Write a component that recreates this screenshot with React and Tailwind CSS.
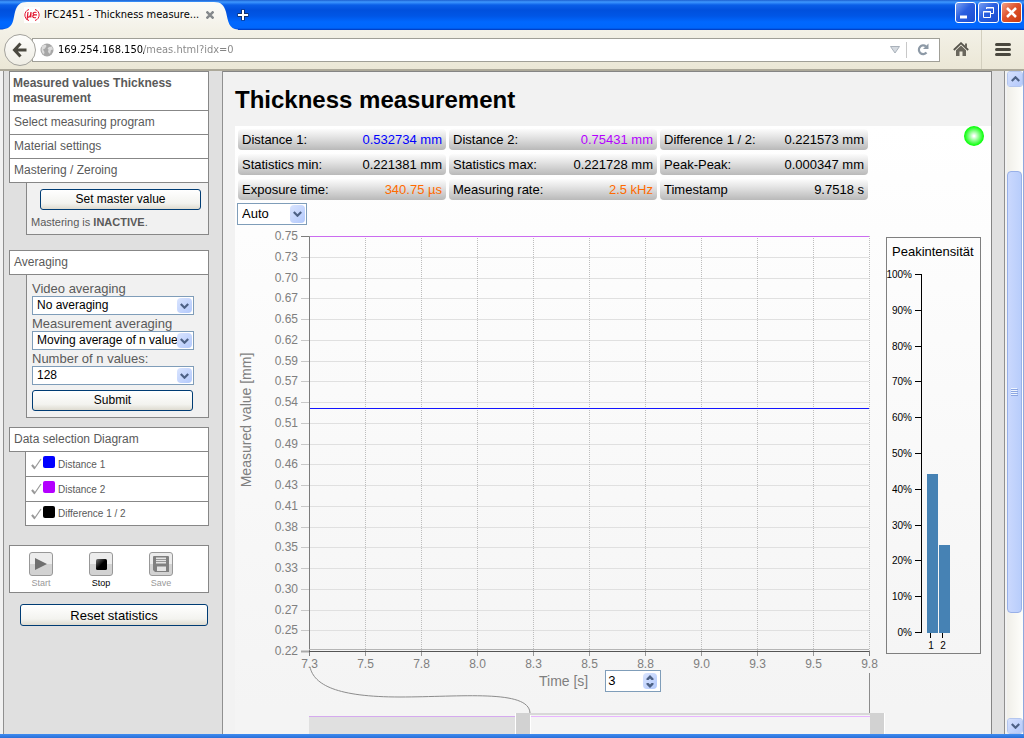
import { useState } from "react";

const MENU = ["Select measuring program", "Material settings", "Mastering / Zeroing"];

const STATS = [
  { label: "Distance 1:", value: "0.532734 mm", color: "text-[#0000ff]" },
  { label: "Distance 2:", value: "0.75431 mm", color: "text-[#b400ff]" },
  { label: "Difference 1 / 2:", value: "0.221573 mm", color: "text-black" },
  { label: "Statistics min:", value: "0.221381 mm", color: "text-black" },
  { label: "Statistics max:", value: "0.221728 mm", color: "text-black" },
  { label: "Peak-Peak:", value: "0.000347 mm", color: "text-black" },
  { label: "Exposure time:", value: "340.75 µs", color: "text-[#ff6a00]" },
  { label: "Measuring rate:", value: "2.5 kHz", color: "text-[#ff6a00]" },
  { label: "Timestamp", value: "9.7518 s", color: "text-black" },
];

const SERIES = [
  { name: "Distance 1", color: "bg-[#0000ff]" },
  { name: "Distance 2", color: "bg-[#b400ff]" },
  { name: "Difference 1 / 2", color: "bg-black" },
];

const Y_TICKS = [
  "0.75", "0.73", "0.70", "0.67", "0.65", "0.62", "0.59", "0.57", "0.54", "0.51", "0.49",
  "0.46", "0.43", "0.41", "0.38", "0.35", "0.33", "0.30", "0.27", "0.25", "0.22",
];
const X_TICKS = ["7.3", "7.5", "7.8", "8.0", "8.3", "8.5", "8.8", "9.0", "9.3", "9.5", "9.8"];

// Plot area inside the chart svg
const PLOT = { left: 74, top: 11, width: 560, height: 415 };

// ── WINDOW FRAME ─────────────────────────────────────────────────────

function TitleBar() {
  return (
    <header className="flex h-[30px] shrink-0 justify-between bg-[linear-gradient(#1c5fd0_0px,#3e98ff_2px,#0a5fe8_5px,#0050dd_10px,#0056e6_16px,#0068ff_22px,#0066fb_28px,#0036b8_30px)]">
      <div className="flex items-center">
        <div className="relative flex h-full w-[236px] items-center pl-6">
          <svg className="absolute left-0 top-0" width="238" height="30" aria-hidden="true">
            <defs>
              <linearGradient id="tab" x1="0" y1="0" x2="0" y2="1">
                <stop offset="0" stopColor="#fbfbf9" />
                <stop offset="1" stopColor="#f3f1e7" />
              </linearGradient>
            </defs>
            <path d="M0 30V29.500C14 29.500 13 20 15 12C17 5 20 2 27 2H214C221 2 224 5 226 12C228 21 229 29.500 238 29.500V30Z" fill="url(#tab)" />
          </svg>
          <svg className="relative" width="16" height="16" viewBox="0 0 16 16" fill="none" stroke="#e2172f" aria-hidden="true">
            <rect width="16" height="16" fill="#fff" stroke="none" />
            <path d="M5 2.500C-.5 4-.5 12 5 13.500M11 2.500C16.500 4 16.500 12 11 13.500" />
            <path d="M4 5 3 13M4 5 3.500 9.500C5 11 6.500 10 7 5L6.800 10.500M12.500 5.500C9 4.500 8 7.500 10.500 7.800C7.500 8.500 8.500 11.500 12 10.500M10 7.800H13" strokeWidth="1.200" />
          </svg>
          <span className="relative ml-1 w-[162px] whitespace-nowrap font-['DejaVu_Sans_Condensed','DejaVu_Sans',sans-serif] text-[11px] text-black">
            IFC2451 - Thickness measure...
          </span>
          <button className="relative" aria-label="Close tab">
            <svg width="8" height="8" stroke="#85898c" strokeWidth="2.500"><path d="M.5.5l7 7M7.500.5l-7 7" /></svg>
          </button>
        </div>
        <button aria-label="New tab" className="ml-px">
          <svg width="12" height="12">
            <path d="M6 .5V11.500M.5 6H11.500" stroke="#10316f" strokeWidth="4" />
            <path d="M6 1V11M1 6H11" stroke="#fff" strokeWidth="2" />
          </svg>
        </button>
      </div>
      <div className="flex gap-0.5 pr-0.5 pt-0.5">
        <button aria-label="Minimize" className="h-[21px] w-[21px] rounded-[3px] border border-white bg-[linear-gradient(135deg,#7aa0f2,#2a5fe0_45%,#1a4dd0)]">
          <svg width="19" height="19"><path d="M4 14h7" stroke="#fff" strokeWidth="3" /></svg>
        </button>
        <button aria-label="Restore" className="h-[21px] w-[21px] rounded-[3px] border border-white bg-[linear-gradient(135deg,#7aa0f2,#2a5fe0_45%,#1a4dd0)]">
          <svg width="19" height="19" fill="none" stroke="#fff">
            <path d="M7.500 6V4.500H14.500V10.500H12M7 5H15M4.500 8.500h7v6h-7zM4 9h8" />
          </svg>
        </button>
        <button aria-label="Close" className="h-[21px] w-[21px] rounded-[3px] border border-white bg-[linear-gradient(135deg,#f0a088,#e0532c_45%,#c83a10)]">
          <svg width="19" height="19"><path d="M5 5l9 9M14 5l-9 9" stroke="#fff" strokeWidth="2.500" /></svg>
        </button>
      </div>
    </header>
  );
}

function NavBar() {
  return (
    <nav className="flex h-[41px] shrink-0 items-center border-b-2 border-[#aca899] bg-[linear-gradient(#f3f1e7,#ebe7d6)] pl-1">
      <button aria-label="Back" className="z-10 flex h-8 w-8 items-center justify-center rounded-full border border-[#a3a29c] bg-[linear-gradient(#fdfdfb,#efede4)]">
        <svg width="16" height="16" fill="none" stroke="#4a483f" strokeWidth="3">
          <path d="M8.500 1.500 2.500 8l6 6.500M3 8H14.500" />
        </svg>
      </button>
      <div className="-ml-1 flex h-6 flex-1 items-center border border-[#a09f97] bg-white pl-[7px]">
        <svg width="14" height="14" aria-hidden="true">
          <circle cx="7" cy="7" r="6.500" fill="#a7a7a7" />
          <path d="M2 3.500C4 1 6 1.500 6.500 3L5 5.500 3 6.500 4.500 9 4 11.500C1.500 9.500 1 7 2 3.500ZM9 4l3-.5 1 3-2 .5-1 4-2-2 .5-2.500-1-1Z" fill="#dcdcdc" />
        </svg>
        {/* host part dark, path part grey */}
        <input
          aria-label="Address"
          defaultValue="169.254.168.150/meas.html?idx=0"
          className="ml-1 h-[22px] min-w-0 flex-1 bg-[linear-gradient(90deg,#000000_86px,#858585_86px)] bg-clip-text font-['DejaVu_Sans_Condensed','DejaVu_Sans',sans-serif] text-[11px] text-transparent outline-none"
        />
        <button aria-label="History"><svg width="10" height="8"><path d="M.5.5h9L5 7Z" fill="#d5dae0" stroke="#a9b1ba" /></svg></button>
        <span className="ml-1.5 h-4 w-px bg-[#c8c8c8]" />
        <button aria-label="Reload" className="ml-2.5 mr-2.5">
          <svg width="12" height="13" fill="none" stroke="#8d99a6" strokeWidth="2.200">
            <path d="M9.500 9.500A4.300 4.300 0 1 1 9 3.500" />
            <path d="M11.500.5V6H6Z" fill="#8d99a6" stroke="none" />
          </svg>
        </button>
      </div>
      <button aria-label="Home" className="ml-[13px]">
        <svg width="16" height="15" fill="none">
          <path d="M.8 8 8 1.200 15.200 8" stroke="#55534b" strokeWidth="1.800" />
          <path d="M12 1.500h2V6l-2-2ZM3 8.300 8 3.600l5 4.700V14H9.500V9.500h-3V14H3Z" fill="#6a675d" />
        </svg>
      </button>
      <span className="ml-3 h-full w-px bg-[#d3cfbe]" />
      <button aria-label="Menu" className="ml-[13px] mr-[13px]">
        <svg width="16" height="13" stroke="#4a483f" strokeWidth="3" strokeLinecap="round"><path d="M1.500 1.500h13M1.500 6.500h13M1.500 11.500h13" /></svg>
      </button>
    </nav>
  );
}

function ScrollButton({ label, up }) {
  return (
    <button aria-label={label} className="flex h-4 w-4 items-center justify-center rounded-[3px] border border-white bg-[linear-gradient(135deg,#d6e1fd,#b3c8fb)] outline outline-[#b4c6ee] -outline-offset-1">
      <svg width="9" height="6" fill="none" stroke="#4d6185" strokeWidth="2.200">
        <path d={up ? "M.8 5 4.500 1.300 8.200 5" : "M.8 1 4.500 4.700 8.200 1"} />
      </svg>
    </button>
  );
}

function ScrollBar() {
  return (
    <div className="flex w-[17px] flex-col items-center border-r border-[#8fa9de] bg-[linear-gradient(90deg,#f0efe9,#fefefb)]">
      <ScrollButton label="Scroll up" up />
      <div className="flex min-h-0 w-full flex-1 flex-col pb-[105px] pt-[84px]">
        <div className="flex w-[15px] flex-1 items-center justify-center rounded-sm border border-[#98b0e8] bg-[linear-gradient(90deg,#cad8fd,#b8cdfb)]">
          <svg width="7" height="8"><path d="M0 1.500h7M0 3.500h7M0 5.500h7M0 7.500h7" stroke="#8ba6e2" /><path d="M0 .5h6M0 2.500h6M0 4.500h6M0 6.500h6" stroke="#eef4fe" /></svg>
        </div>
      </div>
      <ScrollButton label="Scroll down" />
    </div>
  );
}

// ── FORM CONTROLS ────────────────────────────────────────────────────

function XpButton({ children, className }) {
  return (
    <button className={`flex items-center justify-center rounded-[3px] border border-[#003c74] bg-[linear-gradient(#ffffff,#f3f3ef_70%,#dedbd0)] text-black ${className}`}>
      {children}
    </button>
  );
}

function XpSelect({ id, options, className, label }) {
  return (
    <div className={`relative ${className}`}>
      <select id={id} aria-label={label} className="block h-full w-full appearance-none overflow-hidden border border-[#7f9db9] bg-white pl-1 pr-4 text-black">
        {options.map((o) => <option key={o}>{o}</option>)}
      </select>
      <span className="pointer-events-none absolute inset-y-0.5 right-0.5 flex w-[15px] items-center justify-center rounded-sm bg-[linear-gradient(135deg,#d9e4fe,#b3c9fc)]">
        <svg width="9" height="6" fill="none" stroke="#4d6185" strokeWidth="2.200"><path d="M.8 1 4.500 4.700 8.200 1" /></svg>
      </span>
    </div>
  );
}

function PanelTitle({ children }) {
  return <h2 className="flex h-[25px] items-center border border-[#878787] bg-white pl-1">{children}</h2>;
}

// ── SIDEBAR ──────────────────────────────────────────────────────────

function SeriesRow({ name, color }) {
  const [on, setOn] = useState(true);
  return (
    <li className="h-[25px] border-b border-[#878787] last:h-6">
      <label className="flex h-full items-center pl-1">
        <input type="checkbox" checked={on} onChange={() => setOn(!on)} className="sr-only" />
        <svg width="12" height="12" fill="none" stroke={on ? "#999999" : "#ffffff"}>
          <path d="M2 7 4.500 10.500 11 1" strokeWidth="1.200" />
          <path d="M2 7 4.500 10" strokeWidth="2" />
        </svg>
        <span className={`mb-1 ml-px h-3 w-3 rounded-[2px] ${color}`} />
        <span className="ml-[3px] text-[10px]">{name}</span>
      </label>
    </li>
  );
}

function MediaButton({ label, active, children }) {
  return (
    <button className={`flex w-[60px] flex-col items-center text-[9px] leading-[14px] ${active ? "text-black" : "text-[#999999]"}`}>
      <span className="flex h-6 w-6 items-center justify-center rounded-[3px] border border-[#989898] bg-[linear-gradient(#ececec_50%,#d2d2d2_50%)]">
        {children}
      </span>
      {label}
    </button>
  );
}

function Sidebar() {
  return (
    <aside className="flex w-[220px] shrink-0 flex-col border-x border-[#909090] bg-[#e0e0e0] pl-[5px] text-[12px] leading-[15px] text-[#5a5a5a]">
      <div className="w-[200px]">
        <ul className="divide-y divide-[#878787] border border-[#878787] bg-white">
          <li className="py-1 pl-[3px] font-bold leading-[15px]"><a href="#meas">Measured values Thickness measurement</a></li>
          {MENU.map((m) => (
            <li key={m} className="flex h-6 items-center pl-1 last:h-[23px]"><a href="#menu">{m}</a></li>
          ))}
        </ul>
        <div className="ml-[17px] h-[52px] border border-t-0 border-[#878787] bg-[#f1f1f1] pt-1.5">
          <XpButton className="ml-[13px] h-[21px] w-[161px]">Set master value</XpButton>
          <p className="mt-[5px] pl-1 text-[11px]">Mastering is <b>INACTIVE</b>.</p>
        </div>

        <section className="mt-[15px]">
          <PanelTitle>Averaging</PanelTitle>
          <div className="ml-[17px] flex flex-col border border-t-0 border-[#878787] bg-[#f1f1f1] px-[5px] pb-1.5 pt-[5px]">
            <label htmlFor="video" className="h-4 text-[13px] leading-[18px]">Video averaging</label>
            <XpSelect id="video" className="h-[19px] w-[162px]" options={["No averaging"]} />
            <label htmlFor="meas" className="h-4 text-[13px] leading-[18px]">Measurement averaging</label>
            <XpSelect id="meas" className="h-[19px] w-[162px]" options={["Moving average of n values"]} />
            <label htmlFor="count" className="h-4 text-[13px] leading-[18px]">Number of n values:</label>
            <XpSelect id="count" className="h-[19px] w-[162px]" options={["128", "64", "32"]} />
            <XpButton className="mt-[5px] h-[21px] w-[161px]">Submit</XpButton>
          </div>
        </section>

        <section className="mt-[9px]">
          <PanelTitle>Data selection Diagram</PanelTitle>
          <ul className="ml-4 border-x border-[#878787] bg-white">
            {SERIES.map((s) => <SeriesRow key={s.name} {...s} />)}
          </ul>
        </section>

        <div className="mt-[19px] flex h-12 border border-[#878787] bg-white pl-px pt-1.5">
          <MediaButton label="Start">
            <svg width="12" height="12"><path d="M0 0 12 6 0 12Z" fill="#6f6f6f" /></svg>
          </MediaButton>
          <MediaButton label="Stop" active>
            <svg width="11" height="11">
              <defs><linearGradient id="stop" x1="0" y1="0" x2="1" y2="1"><stop offset="0" stopColor="#777" /><stop offset=".5" /></linearGradient></defs>
              <rect width="11" height="11" rx="1.500" fill="url(#stop)" />
            </svg>
          </MediaButton>
          <MediaButton label="Save">
            <svg width="16" height="16">
              <path d="M0 1a1 1 0 0 1 1-1H15a1 1 0 0 1 1 1V16H2L0 14Z" fill="#808080" />
              <path d="M3 1.500h10v6H3zM4 10.500h9V15H4z" fill="#e4e4e4" />
              <path d="M3 3.500h10M3 5.500h10" stroke="#999" />
            </svg>
          </MediaButton>
        </div>
        <XpButton className="ml-[11px] mt-[11px] h-[22px] w-[188px] text-[13px]">Reset statistics</XpButton>
      </div>
    </aside>
  );
}

// ── CHARTS ───────────────────────────────────────────────────────────

function LineChart() {
  const right = PLOT.left + PLOT.width;
  const bottom = PLOT.top + PLOT.height;
  return (
    <svg width="650" height="445" className="block text-[12px]" fill="#7f7f7f" role="img" aria-label="Measured value over time">
      {Y_TICKS.map((t, i) => {
        const y = PLOT.top + Math.round((i * PLOT.height) / 20) + 0.5;
        return (
          <g key={t}>
            <path d={`M${PLOT.left} ${y}H${right}`} stroke="#e0e0e0" />
            <path d={`M${PLOT.left - 8} ${y}H${PLOT.left}`} stroke="#c8c8c8" />
            <text x="63" y={y + 3} textAnchor="end">{t}</text>
          </g>
        );
      })}
      {X_TICKS.map((t, i) => {
        const x = PLOT.left + i * 56 + 0.5;
        return (
          <g key={t}>
            <path d={`M${x} ${PLOT.top}V${bottom}`} stroke="#bdbdbd" strokeDasharray="1 1" />
            <path d={`M${x} ${bottom}v5`} stroke="#999" />
            <text x={x} y="443" textAnchor="middle">{t}</text>
          </g>
        );
      })}
      <text transform="translate(16 195) rotate(-90)" textAnchor="middle" className="text-[14px]">Measured value [mm]</text>
      <path d={`M66 11.500H74.500V${bottom + 5}M${right + 0.5} ${bottom}v5`} fill="none" stroke="#7c7c7c" />
      <path d={`M66 ${bottom + 0.5}H74`} stroke="#aaa" strokeWidth="2" />
      <path d={`M74 ${bottom - 1.5}H${right}`} stroke="#b5b5b5" />
      <path d={`M74 ${bottom + 0.5}H${right}`} stroke="#555" />
      <path d={`M75 11.500H${right}`} stroke="#cb6cf0" />
      <path d={`M75 183.500H${right}`} stroke="#1414ff" />
    </svg>
  );
}

function OverviewStrip() {
  return (
    <svg width="650" height="60" className="block" aria-hidden="true">
      <path d="M74 3h207v57H74z" fill="#e0e0e0" />
      <path d="M74 3.500H281" stroke="#d5aaee" />
      <path d="M295 1H635" stroke="#d8d8d8" strokeWidth="2" />
      <path d="M296 3.500H635" stroke="#e9b5ff" />
      <path d="M281 0h14v60h-14zM635 0h14v60h-14z" fill="#d2d2d2" />
      <path d="M280.500 0v60M295.500 2v58M649.500 0v60" stroke="#fff" />
    </svg>
  );
}

function PeakChart() {
  return (
    <figure className="mt-3 h-[417px] w-[95px] border border-[#7f7f7f]">
      <figcaption className="pl-[5px] pt-1.5 text-[13px] leading-4">Peakintensität</figcaption>
      <svg width="93" height="390" className="block text-[10px]" overflow="visible">
        {Array.from({ length: 11 }).map((_, i) => {
          const y = 14.5 + Math.round(i * 35.8);
          return (
            <g key={i}>
              <path d={`M28 ${y}h6`} stroke="#000" />
              <text x="25" y={y + 3} textAnchor="end">{100 - i * 10}%</text>
            </g>
          );
        })}
        <path d="M34.500 14V373" stroke="#000" />
        <path d="M40 214h11v159H40zM52 285h11v88H52z" fill="#4682b4" />
        <path d="M43.500 373v5M55.500 373v5" stroke="#000" />
        <text x="44" y="389" textAnchor="middle">1</text>
        <text x="56" y="389" textAnchor="middle">2</text>
      </svg>
    </figure>
  );
}

function RangeRow() {
  const [range, setRange] = useState(3);
  return (
    <div className="grid h-[43px]">
      <svg width="650" height="43" overflow="visible" className="[grid-area:1/1]" fill="none" stroke="#8c8c8c" aria-hidden="true">
        <path d="M75-3C79 15 102 27 165 27C225 27 294 19 295 43M634.500 3V43" />
      </svg>
      <div className="z-10 flex h-[22px] items-center gap-[17px] pl-[304px] [grid-area:1/1]">
        <label htmlFor="range" className="text-[14px] text-[#7f7f7f]">Time [s]</label>
        <div className="flex h-full w-14 items-center border border-[#7f9db9] bg-white pr-[3px]">
          <input
            id="range"
            type="number"
            value={range}
            onChange={(e) => setRange(Number(e.target.value))}
            className="w-full min-w-0 flex-1 pl-0.5 text-[13px] [appearance:textfield] [&::-webkit-inner-spin-button]:appearance-none"
          />
          <span className="flex h-4 w-3.5 flex-col rounded-sm bg-[linear-gradient(135deg,#d9e4fe,#b3c9fc)]">
            <button aria-label="Increase" className="flex flex-1 items-center justify-center" onClick={() => setRange(range + 1)}>
              <svg width="8" height="5"><path d="M4 0 7.500 3.500V5H5.500L4 3.500 2.500 5H.5V3.500Z" fill="#4d6185" /></svg>
            </button>
            <button aria-label="Decrease" className="flex flex-1 items-center justify-center" onClick={() => setRange(range - 1)}>
              <svg width="8" height="5"><path d="M4 5 7.500 1.500V0H5.500L4 1.500 2.500 0H.5V1.500Z" fill="#4d6185" /></svg>
            </button>
          </span>
        </div>
      </div>
    </div>
  );
}

// ── MAIN EXPORT ──────────────────────────────────────────────────────

export default function App() {
  return (
    <div className="flex h-screen flex-col overflow-hidden bg-[#f2f2f2] font-['Liberation_Sans',Arial,sans-serif]">
      <TitleBar />
      <NavBar />
      <div className="flex min-h-0 flex-1 overflow-hidden pl-[3px]">
        <Sidebar />
        <main className="flex min-w-0 flex-1 flex-col overflow-hidden border-r border-t border-[#858585] bg-[#f2f2f2] pl-3 text-black">
          <h1 className="flex h-[54px] shrink-0 items-center pt-0.5 text-[24px] font-bold">Thickness measurement</h1>
          <div className="flex-1 bg-[linear-gradient(#ffffff,#f4f4f4_90%)] pl-0.5">
            <div className="flex items-start justify-between pl-px pr-[7px]">
              <dl className="grid grid-cols-[208px_208px_208px] gap-x-[3px] gap-y-1 pt-[3px] text-[13px]">
                {STATS.map((s) => (
                  <div key={s.label} className="flex h-[21px] items-center justify-between rounded-[4px] bg-[linear-gradient(#fcfcfc,#e6e6e6_35%,#b9b9b9)] px-1">
                    <dt>{s.label}</dt>
                    <dd className={s.color}>{s.value}</dd>
                  </div>
                ))}
              </dl>
              <span className="h-5 w-5 rounded-full bg-[radial-gradient(circle,#ffffff_5%,#00ff00_70%)]" role="img" aria-label="Status ok" />
            </div>
            <XpSelect label="Scaling" className="mt-[3px] h-[22px] w-[70px] text-[13px]" options={["Auto", "Manual"]} />
            <div className="-ml-0.5 flex items-start gap-px">
              <div>
                <LineChart />
                <RangeRow />
                <OverviewStrip />
              </div>
              <PeakChart />
            </div>
          </div>
        </main>
        <div className="w-[13px] border-r border-[#909090] bg-[#e0e0e0]" />
        <div className="w-0.5" />
        <ScrollBar />
      </div>
      <div className="h-1 shrink-0 bg-[linear-gradient(#3f8cf0,#2a6fd8)]" />
    </div>
  );
}
